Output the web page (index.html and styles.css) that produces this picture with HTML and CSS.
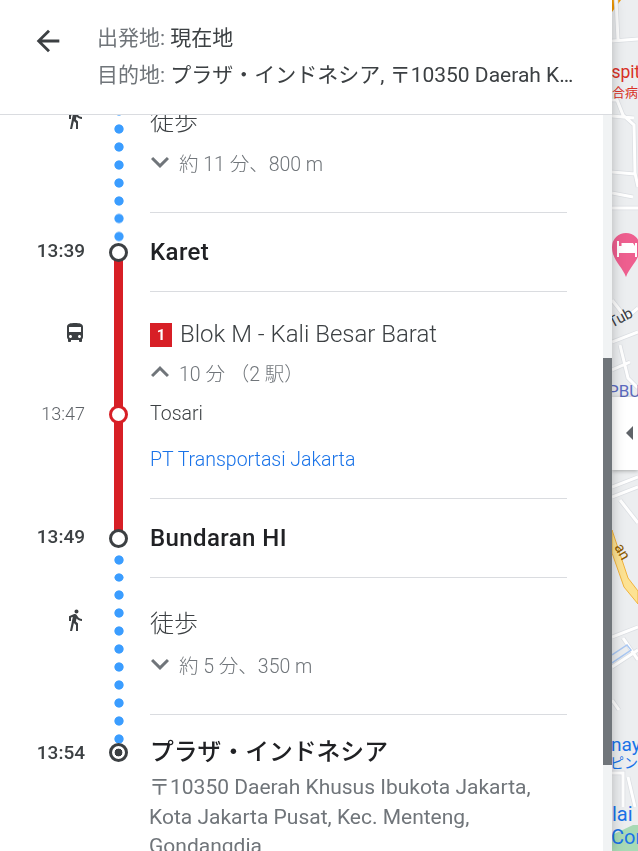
FILE: index.html
```html
<!DOCTYPE html>
<html lang="ja">
<head>
    <meta charset="UTF-8">
    <meta name="viewport" content="width=device-width, initial-scale=1.0">
    <title>経路</title>
    <link rel="stylesheet" href="styles.css">
</head>
<body>
    <div class="panel">
        <div class="top-bar">
            <svg class="back" viewBox="0 0 24 24"><path d="M20 11H7.83l5.59-5.59L12 4l-8 8 8 8 1.41-1.41L7.83 13H20v-2z"/></svg>
            <div class="route">
                <div class="route-line"><span class="route-label">出発地:</span> 現在地</div>
                <div class="route-line"><span class="route-label">目的地:</span> プラザ・インドネシア, 〒10350 Daerah Khusus Ibukota Jakarta</div>
            </div>
        </div>
        <div class="body">
            <div class="steps">
                <div class="step walk first">
                    <div class="side">
                        <svg class="mode-icon walk-icon" viewBox="0 0 24 24"><path d="M13.5 5.5c1.1 0 2-.9 2-2s-.9-2-2-2-2 .9-2 2 .9 2 2 2zM9.8 8.9L7 23h2.1l1.8-8 2.1 2v6h2v-7.5l-2.1-2 .6-3C14.8 12 16.8 13 19 13v-2c-1.9 0-3.5-1-4.3-2.4l-1-1.6c-.4-.6-1-1-1.7-1-.3 0-.5.1-.8.1L6 8.3V13h2V9.6l1.8-.7"/></svg>
                    </div>
                    <div class="rail dots"></div>
                    <div class="main">
                        <div class="walk-title">徒歩</div>
                        <div class="detail">
                            <svg class="chevron" viewBox="6 8 12 8"><path d="M16.59 8.59L12 13.17 7.41 8.59 6 10l6 6 6-6z"/></svg>
                            約 11 分、800 m
                        </div>
                    </div>
                </div>

                <div class="step stop karet">
                    <div class="side"><span class="time">13:39</span></div>
                    <div class="rail">
                        <div class="half dots"></div>
                        <div class="half line"></div>
                        <div class="node"></div>
                    </div>
                    <div class="main"><div class="stop-name">Karet</div></div>
                </div>

                <div class="step transit">
                    <div class="side">
                        <svg class="mode-icon bus-icon" viewBox="0 0 24 24"><path d="M4 16c0 .88.39 1.67 1 2.22V20c0 .55.45 1 1 1h1c.55 0 1-.45 1-1v-1h8v1c0 .55.45 1 1 1h1c.55 0 1-.45 1-1v-1.78c.61-.55 1-1.34 1-2.22V6c0-3.5-3.58-4-8-4s-8 .5-8 4v10zm3.5 1c-.83 0-1.5-.67-1.5-1.5S6.67 14 7.5 14s1.5.67 1.5 1.5S8.33 17 7.5 17zm9 0c-.83 0-1.5-.67-1.5-1.5s.67-1.5 1.5-1.5 1.5.67 1.5 1.5-.67 1.5-1.5 1.5zm1.5-6H6V6h12v5z"/></svg>
                        <span class="time light">13:47</span>
                    </div>
                    <div class="rail line">
                        <div class="node red"></div>
                    </div>
                    <div class="main">
                        <div class="line-title"><span class="badge">1</span>Blok M - Kali Besar Barat</div>
                        <div class="detail">
                            <svg class="chevron" viewBox="6 8 12 8"><path d="M12 8l-6 6 1.41 1.41L12 10.83l4.59 4.58L18 14z"/></svg>
                            10 分 （2 駅）
                        </div>
                        <div class="stop-small">Tosari</div>
                        <a class="agency" href="#">PT Transportasi Jakarta</a>
                    </div>
                </div>

                <div class="step stop bundaran">
                    <div class="side"><span class="time">13:49</span></div>
                    <div class="rail">
                        <div class="half line"></div>
                        <div class="half dots"></div>
                        <div class="node"></div>
                    </div>
                    <div class="main"><div class="stop-name">Bundaran HI</div></div>
                </div>

                <div class="step walk second">
                    <div class="side">
                        <svg class="mode-icon walk-icon" viewBox="0 0 24 24"><path d="M13.5 5.5c1.1 0 2-.9 2-2s-.9-2-2-2-2 .9-2 2 .9 2 2 2zM9.8 8.9L7 23h2.1l1.8-8 2.1 2v6h2v-7.5l-2.1-2 .6-3C14.8 12 16.8 13 19 13v-2c-1.9 0-3.5-1-4.3-2.4l-1-1.6c-.4-.6-1-1-1.7-1-.3 0-.5.1-.8.1L6 8.3V13h2V9.6l1.8-.7"/></svg>
                    </div>
                    <div class="rail dots"></div>
                    <div class="main">
                        <div class="walk-title">徒歩</div>
                        <div class="detail">
                            <svg class="chevron" viewBox="6 8 12 8"><path d="M16.59 8.59L12 13.17 7.41 8.59 6 10l6 6 6-6z"/></svg>
                            約 5 分、350 m
                        </div>
                    </div>
                </div>

                <div class="step end">
                    <div class="side"><span class="time">13:54</span></div>
                    <div class="rail">
                        <div class="end-dots dots"></div>
                        <div class="node target"></div>
                    </div>
                    <div class="main">
                        <div class="stop-name">プラザ・インドネシア</div>
                        <div class="address">〒10350 Daerah Khusus Ibukota Jakarta,<br>Kota Jakarta Pusat, Kec. Menteng,<br>Gondangdia</div>
                    </div>
                </div>
            </div>
            <div class="scrollbar"><div class="thumb"></div></div>
        </div>
    </div>

    <div class="map">
        <svg class="map-art" viewBox="612 0 26 851">
            <rect x="612" y="0" width="26" height="851" fill="#eceef0"/>
            <polygon points="612,0 621,0 612,12" fill="#f29900"/>
            <g fill="none" stroke="#dcdfe3" stroke-width="4.500">
                <path d="M616 0L618 40M612 41L638 39M612 100L617 100L623 115L634 125L635 173L638 187M612 116L634 118M612 172L635 174M612 193L633 197M612 208L638 208"/>
                <path d="M612 300L626 318L638 308M612 342L638 332M620 345L628 378L638 388M612 370L630 362"/>
                <path d="M612 487L638 477M612 497L638 487M620 500L638 523"/>
                <path d="M612 637L638 627M623 638L638 660M612 667L638 650M612 700L619 710"/>
                <path d="M612 773L623 773L623 807M628 777L635 807"/>
            </g>
            <g fill="none" stroke="#fff" stroke-width="3">
                <path d="M616 0L618 40M612 41L638 39M612 100L617 100L623 115L634 125L635 173L638 187M612 116L634 118M612 172L635 174M612 193L633 197M612 208L638 208"/>
                <path d="M612 300L626 318L638 308M612 342L638 332M620 345L628 378L638 388M612 370L630 362"/>
                <path d="M612 487L638 477M612 497L638 487M620 500L638 523"/>
                <path d="M612 637L638 627M623 638L638 660M612 667L638 650M612 700L619 710"/>
                <path d="M612 773L623 773L623 807M628 777L635 807"/>
            </g>
            <polygon points="612,530 628,578 638,591 638,604 624,587 612,553" fill="#fde293" stroke="#f2b33d" stroke-width="1"/>
            <path d="M612 655L627 645L631 650L612 663" fill="none" stroke="#a9c7f2" stroke-width="1.5"/>
            <polygon points="612,835 633,825 638,825 638,851 612,851" fill="#a8dab5"/>
            <path d="M626 277C622 266 612 260 612 247a14 14 0 0 1 28 0C640 260 630 266 626 277z" fill="#ee5f8f"/>
            <path d="M617 241h2v5h2.500v-3h4.500h7l2 3v-3h2v14h-2v-4h-16v4h-2z" fill="#fff"/>
            <text class="map-text red" x="611.500" y="78" font-size="17.500">spit</text>
            <text class="map-text red" x="612" y="97" font-size="13">合病</text>
            <text class="map-text dark" x="612" y="328" font-size="15" transform="rotate(-28 612 328)">Tub</text>
            <text class="map-text indigo" x="608" y="397" font-size="17">PBU</text>
            <text class="map-text brown" x="614" y="547" font-size="15" transform="rotate(60 614 547)">an</text>
            <text class="map-text blue" x="611" y="751" font-size="19">nay</text>
            <text class="map-text blue" x="610" y="768" font-size="14">ピン</text>
            <text class="map-text blue" x="612" y="821" font-size="20">lai</text>
            <text class="map-text blue" x="611" y="844" font-size="20">Cor</text>
        </svg>
        <div class="collapse"><div class="collapse-arrow"></div></div>
    </div>
</body>
</html>
```

FILE: styles.css
```css
* {
    margin: 0;
    padding: 0;
    box-sizing: border-box;
}
body {
    display: flex;
    height: 100vh;
    overflow: hidden;
    font-family: Roboto, "Noto Sans CJK JP", sans-serif;
    color: #3c4043;
    background: #eceef0;
}
.panel {
    width: 612px;
    flex: none;
    display: flex;
    flex-direction: column;
    background: #fff;
    box-shadow: 0 0 12px rgba(0, 0, 0, 0.25);
    z-index: 2;
}
.top-bar {
    height: 115px;
    flex: none;
    display: flex;
    border-bottom: 1px solid #dadce0;
}
.back {
    width: 34px;
    height: 34px;
    margin: 24px 0 0 31px;
    fill: #3c4043;
}
.route {
    width: 477px;
    margin-left: 32px;
    padding-top: 20px;
    font-size: 21px;
    will-change: transform;
}
.route-line {
    height: 37px;
    line-height: 37px;
    white-space: nowrap;
    overflow: hidden;
    text-overflow: ellipsis;
}
.route-label {
    color: #70757a;
}
.body {
    flex: 1;
    display: flex;
    min-height: 0;
}
.steps {
    flex: 1;
    overflow: hidden;
    will-change: transform;
}
.scrollbar {
    width: 9px;
    background: #f1f3f4;
}
.thumb {
    height: 407px;
    margin-top: 243px;
    background: #70757a;
}

/* one block of the trip: time/icon, rail, text */
.step {
    display: grid;
    grid-template-columns: 87px 63px 417px;
}
.step.first {
    margin-top: -39px;
}
.walk {
    height: 137px;
}
.stop {
    height: 79px;
}
.transit {
    height: 207px;
}
.main {
    border-bottom: 1px solid #dadce0;
}
.end .main {
    border-bottom: none;
}
.side {
    display: flex;
    flex-direction: column;
    align-items: flex-end;
}
.mode-icon {
    width: 24px;
    height: 24px;
    flex: none;
    fill: #3c4043;
}
.walk-icon {
    margin-top: 30px;
}
.bus-icon {
    margin-top: 29px;
}
.time {
    padding-right: 2px;
    font-size: 19px;
    font-weight: 500;
    line-height: 24px;
    margin-top: 26px;
}
.time.light {
    margin-top: 57px;
    font-size: 18px;
    font-weight: 300;
    color: #5f6368;
}
.end .time {
    margin-top: 26px;
}

.rail {
    position: relative;
    display: flex;
    flex-direction: column;
    align-items: center;
}
.half {
    flex: 1;
    align-self: stretch;
}
.dots {
    background-image: radial-gradient(circle, #3b9dff 4.2px, transparent 5px);
    background-size: 18px 18px;
    background-repeat: repeat-y;
    background-position: center 8px;
}
.line {
    background: linear-gradient(#d71f26, #d71f26) center / 9px 100% no-repeat;
}
.karet .half.dots {
    background-position: center -3.5px;
}
.bundaran .half.dots {
    background-position: center 12px;
}
.end-dots {
    align-self: stretch;
    height: 30px;
    background-position: center -3px;
}
.node {
    position: absolute;
    left: 22px;
    top: 30px;
    width: 19px;
    height: 19px;
    border: 3px solid #3c4043;
    border-radius: 50%;
    background: #fff;
}
.node.red {
    top: 113px;
    border-color: #d71f26;
}
.node.target {
    top: 28px;
    background: radial-gradient(circle, #3c4043 3.6px, #fff 4.2px);
}

.walk-title {
    font-size: 24px;
    font-weight: 300;
    line-height: 32px;
    padding-top: 30px;
}
.detail {
    display: flex;
    align-items: center;
    gap: 10px;
    height: 32px;
    font-size: 19.5px;
    font-weight: 300;
    color: #70757a;
}
.walk .detail {
    margin-top: 8px;
}
.chevron {
    width: 18px;
    height: 12px;
    margin-left: 1px;
    fill: #70757a;
}
.stop-name {
    font-size: 24px;
    font-weight: 500;
    letter-spacing: 0.4px;
    color: #202124;
    line-height: 32px;
    padding-top: 23px;
}
.end .stop-name {
    padding-top: 21px;
    font-size: 23.8px;
    letter-spacing: 0;
}
.line-title {
    display: flex;
    align-items: center;
    height: 24px;
    margin-top: 30px;
    font-size: 24px;
    font-weight: 300;
}
.badge {
    width: 22px;
    height: 24px;
    margin: 2px 8px 0 0;
    background: #d71f26;
    color: #fff;
    font-size: 15px;
    font-weight: 700;
    line-height: 24px;
    text-align: center;
}
.transit .detail {
    margin-top: 10px;
}
.stop-small {
    margin-top: 14px;
    font-size: 19.5px;
    font-weight: 300;
    line-height: 24px;
}
.agency {
    display: block;
    margin-top: 22px;
    font-size: 19.5px;
    font-weight: 300;
    line-height: 24px;
    color: #1a73e8;
    text-decoration: none;
}
.address {
    margin: 5px 0 0 -1px;
    font-size: 21px;
    line-height: 29.5px;
    color: #70757a;
}

.map {
    flex: 1;
    position: relative;
    overflow: hidden;
}
.map-art {
    display: block;
    width: 26px;
    height: 851px;
}
.map-text {
    font-family: Roboto, "Noto Sans CJK JP", sans-serif;
}
.red { fill: #d93025; }
.dark { fill: #3c4043; }
.indigo { fill: #5c6bc0; }
.brown { fill: #8a5a00; }
.blue { fill: #1a73e8; }
.collapse {
    position: absolute;
    left: 0;
    top: 397px;
    width: 26px;
    height: 73px;
    background: #fff;
    box-shadow: 0 1px 4px rgba(0, 0, 0, 0.3);
}
.collapse-arrow {
    position: absolute;
    left: 14px;
    top: 29px;
    border-style: solid;
    border-width: 7px 7px 7px 0;
    border-color: transparent #5f6368 transparent transparent;
}
```
